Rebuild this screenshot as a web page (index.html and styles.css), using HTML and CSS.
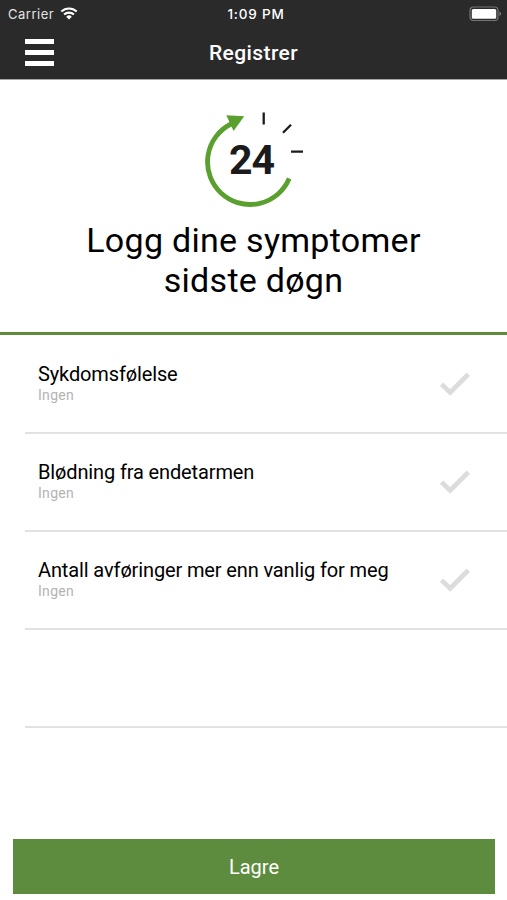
FILE: index.html
```html
<!DOCTYPE html>
<html lang="no">
<head>
    <meta charset="UTF-8">
    <meta name="viewport" content="width=device-width, initial-scale=1.0">
    <title>Registrer</title>
    <link rel="stylesheet" href="styles.css">
</head>
<body>
    <header class="header">
        <div class="status-bar">
            <div class="carrier">
                <span>Carrier</span>
                <svg class="wifi" viewBox="0 0 18 13" width="18" height="13">
                    <path d="M1.3 4.6a11 11 0 0 1 15.4 0M4.1 7.6a7 7 0 0 1 9.8 0" fill="none" stroke="#fff" stroke-width="2.1"/>
                    <path d="M9 12.5L6.2 9.7a4 4 0 0 1 5.6 0z" fill="#fff"/>
                </svg>
            </div>
            <span class="time">1:09 PM</span>
            <svg class="battery" viewBox="0 0 33 16" width="33" height="16">
                <rect x="1" y="1" width="28" height="13.5" rx="3.5" fill="none" stroke="#757575" stroke-width="1.2"/>
                <rect x="2.8" y="2.9" width="24.4" height="9.8" rx="1.5" fill="#fff"/>
                <path d="M30.5 5.5q3.2 2.3 0 4.6z" fill="#858585"/>
            </svg>
        </div>
        <div class="nav-bar">
            <button class="menu" aria-label="Meny"><i></i><i></i><i></i></button>
            <h2>Registrer</h2>
        </div>
    </header>

    <section class="intro">
        <svg class="clock" viewBox="200 107 108 104" width="108" height="104">
            <path d="M231 124A42.500 42.500 0 1 0 289.200 178.500" fill="none" stroke="#59a02f" stroke-width="4.800"/>
            <path d="M226.300 115.200L244.200 116.300L233.600 131z" fill="#59a02f"/>
            <path d="M263.700 112.500v12M291 124.800l-8 8M291 151.700h12" stroke="#1b1b1b" stroke-width="2.300"/>
            <text class="hours" x="251.500" y="174" text-anchor="middle">24</text>
        </svg>
        <h1>Logg dine symptomer<br>sidste døgn</h1>
    </section>

    <ul class="symptoms">
        <li>
            <div class="symptom">
                <span class="name">Sykdomsfølelse</span>
                <span class="value">Ingen</span>
            </div>
            <svg class="check" viewBox="0 0 30 24" width="30" height="24"><path d="M1.500 12.200L10.200 20.500L28.300 2.200" /></svg>
        </li>
        <li>
            <div class="symptom">
                <span class="name">Blødning fra endetarmen</span>
                <span class="value">Ingen</span>
            </div>
            <svg class="check" viewBox="0 0 30 24" width="30" height="24"><path d="M1.500 12.200L10.200 20.500L28.300 2.200" /></svg>
        </li>
        <li>
            <div class="symptom">
                <span class="name">Antall avføringer mer enn vanlig for meg</span>
                <span class="value">Ingen</span>
            </div>
            <svg class="check" viewBox="0 0 30 24" width="30" height="24"><path d="M1.500 12.200L10.200 20.500L28.300 2.200" /></svg>
        </li>
        <li></li>
    </ul>

    <button class="save">Lagre</button>
</body>
</html>
```

FILE: styles.css
```css
* {
    box-sizing: border-box;
}

body {
    font-family: Roboto, sans-serif;
    margin: 0;
    height: 900px;
    background: #fff;
    color: #000;
    display: flex;
    flex-direction: column;
}

.header {
    height: 79px;
    background: #2a2a2a;
    color: #fff;
    box-shadow: 0 1px 0 #a6a6a6;
}

.status-bar {
    height: 27px;
    padding: 0 5px 0 8px;
    display: grid;
    grid-template-columns: 1fr auto 1fr;
    align-items: center;
    font-family: Inter, sans-serif;
    font-size: 13px;
}

.carrier {
    display: flex;
    align-items: center;
    gap: 6px;
    color: #e4e4e4;
    letter-spacing: 0.5px;
}

.time {
    font-size: 13.5px;
    font-weight: 500;
    letter-spacing: 0.8px;
    padding-left: 2px;
}

.battery {
    justify-self: end;
}

.nav-bar {
    height: 51px;
    padding: 0 25px;
    display: grid;
    grid-template-columns: 29px 1fr 29px;
    align-items: center;
}

.menu {
    display: flex;
    flex-direction: column;
    gap: 6px;
    padding: 0;
    border: none;
    background: none;
}

.menu i {
    height: 4.7px;
    width: 29px;
    background: #fff;
}

.nav-bar h2 {
    margin: 0;
    text-align: center;
    font-size: 21px;
    font-weight: 500;
    letter-spacing: 0.4px;
}

.intro {
    height: 256px;
    padding-top: 28px;
    border-bottom: 3px solid #5e8c3e;
    display: flex;
    flex-direction: column;
    align-items: center;
}

.hours {
    font-size: 41px;
    font-weight: 700;
    letter-spacing: -1px;
    fill: #1b1b1b;
}

.intro h1 {
    margin: 9px 0 0;
    text-align: center;
    font-size: 34px;
    font-weight: 400;
    line-height: 40px;
    letter-spacing: 0.28px;
}

.symptoms {
    list-style: none;
    margin: 1px 0 0 25px;
    padding: 0;
}

.symptoms li {
    height: 98px;
    padding: 0 37px 0 13px;
    border-bottom: 2px solid #e2e2e2;
    display: flex;
    align-items: center;
    justify-content: space-between;
}

.symptom {
    display: flex;
    flex-direction: column;
    padding-bottom: 2px;
}

.name {
    font-size: 20px;
    line-height: 24px;
    letter-spacing: -0.13px;
}

.value {
    font-size: 14px;
    line-height: 18px;
    color: #b3b3b3;
    letter-spacing: 0.3px;
}

.check path {
    fill: none;
    stroke: #dcdcdc;
    stroke-width: 4.8;
}

.save {
    height: 55px;
    margin: auto 12px 6px 13px;
    border: none;
    background: #5e8c3e;
    color: #fff;
    font-family: inherit;
    font-size: 20px;
    cursor: pointer;
}
```
